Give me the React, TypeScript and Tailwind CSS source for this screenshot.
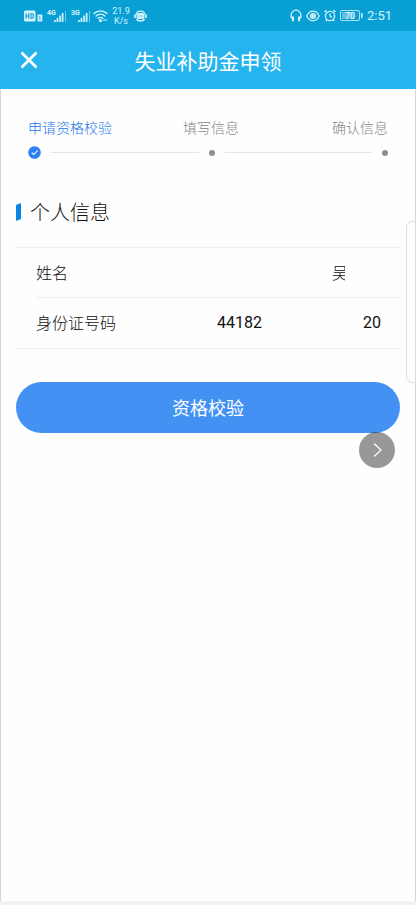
import React from "react";

function SignalBars({ label }: { label: string }) {
  return (
    <svg width="20" height="14" viewBox="0 0 20 14" fill="currentColor" aria-hidden="true">
      <text x="0" y="6" fontSize="7" fontWeight="700" fontFamily="'Liberation Sans Narrow', Roboto, sans-serif">
        {label}
      </text>
      <rect x="7" y="11" width="1.7" height="2" />
      <rect x="9.6" y="9" width="1.7" height="4" />
      <rect x="12.2" y="6.5" width="1.7" height="6.5" />
      <rect x="14.8" y="4" width="1.7" height="9" />
      <rect x="18" y="2" width="1" height="11" opacity="0.5" />
    </svg>
  );
}

function StatusBar() {
  return (
    <div className="flex h-[31px] items-center bg-[#08a0d4] px-6 font-[Roboto,sans-serif] font-normal text-[#d5f3fc]">
      <svg width="20" height="12" viewBox="0 0 20 12" fill="currentColor" aria-hidden="true">
        <rect x="0" y="0.5" width="11.5" height="11" rx="1.5" />
        <path d="M2 3.300v5.400M4.800 3.300v5.400M2 6h2.800M7 3.800v4.400h.8c1 0 1.700-.9 1.700-2.200s-.7-2.200-1.700-2.200z" stroke="#08a0d4" strokeWidth="1.100" fill="none" />
        <rect x="13.5" y="4.5" width="4.800" height="7" rx="0.8" />
        <path d="M15.100 7l.8-.6v4" stroke="#08a0d4" strokeWidth="0.8" fill="none" />
      </svg>
      <div className="ml-[3px] flex gap-1">
        <SignalBars label="4G" />
        <SignalBars label="3G" />
      </div>
      <svg className="ml-[2px]" width="15" height="14" viewBox="0 0 15 14" fill="none" stroke="currentColor" strokeWidth="1.400" strokeLinecap="round" aria-hidden="true">
        <path d="M1 4.600C4.700.9 10.300.9 14 4.600M3.100 7c2.500-2.500 6.300-2.500 8.800 0M5.200 9.300c1.300-1.300 3.300-1.300 4.600 0" />
        <circle cx="7.5" cy="11.6" r="0.9" fill="currentColor" />
        <path d="M10.200 11.500l.8-1 .8 1M12.400 10.700l.7 1 .7-1" strokeWidth="0.900" />
      </svg>
      <div className="ml-1 w-[18px] text-center text-[9px] leading-[10px]">
        21.9
        <br />
        K/s
      </div>
      <svg className="ml-1" width="13" height="12" viewBox="0 0 13 12" fill="none" stroke="currentColor" aria-hidden="true">
        <path d="M2 4.500C3 .1 10 .1 11 4.500" strokeWidth="1.300" />
        <rect x="2.500" y="3" width="8" height="6" rx="2.500" fill="currentColor" stroke="none" />
        <path d="M1 4.500v3.500M12 4.500v3.500" strokeWidth="1.700" />
        <path d="M4 6h5" stroke="#08a0d4" strokeWidth="0.8" strokeDasharray="1 .6" />
        <path d="M2.500 9c1.500 2.700 6.500 2.700 8 0" strokeWidth="1.600" />
      </svg>

      <div className="ml-auto flex items-center gap-1">
        <svg width="12" height="13" viewBox="0 0 12 13" fill="none" stroke="currentColor" strokeWidth="1.300" aria-hidden="true">
          <path d="M1.200 9.500V6a4.800 4.800 0 0 1 9.600 0v3.500" />
          <path d="M3 7.500v4.800M9 7.500v4.800" strokeWidth="2" />
        </svg>
        <svg width="14" height="12" viewBox="0 0 14 12" fill="none" stroke="currentColor" strokeWidth="1.200" aria-hidden="true">
          <path d="M.8 6c3-6.400 9.400-6.400 12.400 0-3 6.400-9.400 6.400-12.400 0z" />
          <circle cx="7" cy="6" r="2.400" />
          <circle cx="7" cy="6" r="1.200" fill="currentColor" />
        </svg>
        <svg width="12" height="13" viewBox="0 0 12 13" fill="none" stroke="currentColor" strokeWidth="1.300" aria-hidden="true">
          <circle cx="6" cy="7" r="4.600" />
          <path d="M6 4.500V7l2 1.500M.5 3l2-1.800M11.500 3l-2-1.800M2.800 10.600L1.700 12M9.200 10.600L10.300 12" />
        </svg>
        <svg width="23" height="12" viewBox="0 0 23 12" aria-hidden="true">
          <rect x="0.500" y="0.500" width="19" height="10" rx="1.500" fill="none" stroke="currentColor" opacity="0.800" />
          <rect x="2" y="2" width="12" height="7" fill="currentColor" opacity="0.400" />
          <rect x="21" y="3" width="1.500" height="5" fill="currentColor" />
          <text x="10" y="9" textAnchor="middle" fontSize="9" fill="#ffffff">
            70
          </text>
        </svg>
        <span className="text-[13px] leading-4">2:51</span>
      </div>
    </div>
  );
}

function Steps() {
  return (
    <section className="px-[27px] pt-7">
      <div className="grid grid-cols-[1fr_auto_1fr] text-sm leading-5 text-[#868686]">
        <span className="text-[#1f74ee]">申请资格校验</span>
        <span className="pl-[6px]">填写信息</span>
        <span className="text-right">确认信息</span>
      </div>
      <div className="mt-[9px] flex items-center gap-[10px]">
        <svg width="13" height="13" viewBox="0 0 13 13" aria-hidden="true">
          <circle cx="6.500" cy="6.500" r="6.300" fill="#2b82f6" />
          <path d="M3.700 6.700l2 1.900 3.900-3.900" fill="none" stroke="#fff" strokeWidth="1.100" />
        </svg>
        <div className="h-px flex-1 bg-[#e4e4e4]" />
        <div className="size-[6px] rounded-full bg-[#8e8e8e]" />
        <div className="h-px flex-1 bg-[#e4e4e4]" />
        <div className="size-[6px] rounded-full bg-[#8e8e8e]" />
      </div>
    </section>
  );
}

export default function App() {
  return (
    <div className="relative flex min-h-screen flex-col bg-[#fefefe] font-['Noto_Sans_CJK_SC',sans-serif] font-light text-[#111111]">
      <StatusBar />
      <header className="grid h-[58px] grid-cols-[1fr_auto_1fr] items-center bg-[#26b4ee] px-5 text-white">
        <button type="button" aria-label="关闭" className="flex size-[18px] items-center justify-center">
          <svg width="18" height="18" viewBox="0 0 18 18" fill="none" stroke="currentColor" strokeWidth="2.800" aria-hidden="true">
            <path d="M1.500 1.500l15 15M16.500 1.500l-15 15" />
          </svg>
        </button>
        <h1 className="text-[21px] leading-8 font-normal">失业补助金申领</h1>
      </header>

      <main className="flex-1 border-x border-[#d6d6d6]">
        <Steps />

        <section className="px-[15px] pt-[39px]">
          <div className="flex items-center gap-[9px]">
            <svg width="5" height="18" viewBox="0 0 5 18" aria-hidden="true">
              <path d="M0 2L5 0v16l-5 2z" fill="#0a84e2" />
            </svg>
            <h2 className="text-xl leading-7 font-light">个人信息</h2>
          </div>

          <dl className="mt-[21px] border-y border-[#efefef] text-base leading-6">
            <div className="ml-5 flex h-[50px] items-start border-b border-[#efefef] pt-3 pr-[19px]">
              <dt className="flex-1">姓名</dt>
              <dd className="w-[49px]">
                <span className="block w-[13px] overflow-hidden">吴</span>
              </dd>
            </div>
            <div className="ml-5 flex h-[50px] items-start pt-3 pr-[19px]">
              <dt className="flex-1">身份证号码</dt>
              <dd className="flex w-[164px] justify-between pt-px font-[Roboto,sans-serif] font-normal">
                <span>44182</span>
                <span>20</span>
              </dd>
            </div>
          </dl>

          <button type="button" className="mt-[33px] h-[51px] w-full rounded-full bg-[#4392f3] pb-[2px] text-lg font-normal text-white">
            资格校验
          </button>
        </section>
      </main>

      <footer className="h-1 bg-[#f3f3f3]" />

      <div className="absolute top-[221px] right-0 h-[162px] w-[10px] rounded-l-md border border-[#dcdcdc] bg-[#fefefe]" />
      <button
        type="button"
        aria-label="下一步"
        className="absolute top-[432px] right-[21px] flex size-9 items-center justify-center rounded-full bg-black/40 text-white"
      >
        <svg width="10" height="14" viewBox="0 0 10 14" fill="none" stroke="currentColor" strokeWidth="1.200" aria-hidden="true">
          <path d="M2 0.500l7 6.500-7 6.500" />
        </svg>
      </button>
    </div>
  );
}
